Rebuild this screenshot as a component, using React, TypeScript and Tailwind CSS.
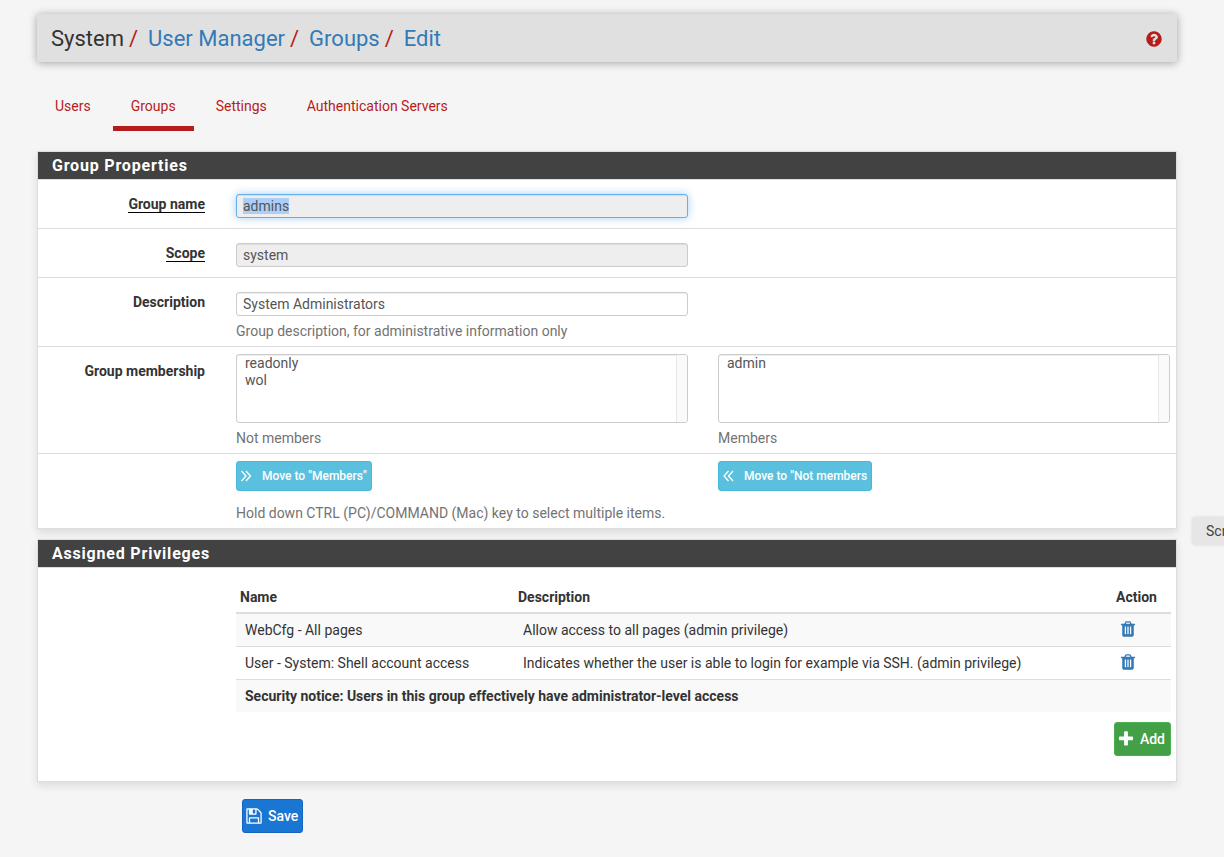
import React, { useEffect, useRef } from 'react';

interface IconProps {
  path: string;
  className?: string;
}

const icons = {
  help: 'M1024 1376v-192q0-14-9-23t-23-9h-192q-14 0-23 9t-9 23v192q0 14 9 23t23 9h192q14 0 23-9t9-23zm256-672q0-88-55.5-163t-138.5-116-170-41q-243 0-371 213-15 24 8 42l132 100q7 6 19 6 16 0 25-12 53-68 86-92 34-24 86-24 48 0 85.5 26t37.5 59q0 38-20 61t-68 45q-63 28-115.5 86.5t-52.5 125.5v36q0 14 9 23t23 9h192q14 0 23-9t9-23q0-19 21.5-49.5t54.5-49.5q32-18 49-28.5t46-35 44.5-48 28-60.5 12.5-81zm384 192q0 209-103 385.5t-279.5 279.5-385.5 103-385.5-103-279.5-279.5-103-385.5 103-385.5 279.5-279.5 385.5-103 385.5 103 279.5 279.5 103 385.5z',
  trash: 'M704 1376v-704q0-14-9-23t-23-9h-64q-14 0-23 9t-9 23v704q0 14 9 23t23 9h64q14 0 23-9t9-23zm256 0v-704q0-14-9-23t-23-9h-64q-14 0-23 9t-9 23v704q0 14 9 23t23 9h64q14 0 23-9t9-23zm256 0v-704q0-14-9-23t-23-9h-64q-14 0-23 9t-9 23v704q0 14 9 23t23 9h64q14 0 23-9t9-23zm-544-992h448l-48-117q-7-9-17-11h-317q-10 2-17 11zm928 32v64q0 14-9 23t-23 9h-96v948q0 83-47 143.5t-113 60.5h-832q-66 0-113-58.5t-47-141.5v-952h-96q-14 0-23-9t-9-23v-64q0-14 9-23t23-9h309l70-167q15-37 54-63t79-26h320q40 0 79 26t54 63l70 167h309q14 0 23 9t9 23z',
  plus: 'M1600 736v192q0 40-28 68t-68 28h-416v416q0 40-28 68t-68 28h-192q-40 0-68-28t-28-68v-416h-416q-40 0-68-28t-28-68v-192q0-40 28-68t68-28h416v-416q0-40 28-68t68-28h192q40 0 68 28t28 68v416h416q40 0 68 28t28 68z',
  save: 'M512 1536h768v-384h-768v384zm896 0h128v-896q0-14-10-38.5t-20-34.5l-281-281q-10-10-34-20t-39-10v416q0 40-28 68t-68 28h-576q-40 0-68-28t-28-68v-416h-128v1280h128v-416q0-40 28-68t68-28h832q40 0 68 28t28 68v416zm-384-928v-320q0-13-9.5-22.5t-22.5-9.5h-192q-13 0-22.5 9.5t-9.5 22.5v320q0 13 9.5 22.5t22.5 9.5h192q13 0 22.5-9.5t9.5-22.5zm640 32v928q0 40-28 68t-68 28h-1344q-40 0-68-28t-28-68v-1344q0-40 28-68t68-28h928q40 0 88 20t76 48l280 280q28 28 48 76t20 88z',
};

const Icon: React.FC<IconProps> = ({ path, className }) => (
  <svg viewBox="0 0 1792 1792" fill="currentColor" className={className} aria-hidden="true">
    <path d={path} />
  </svg>
);

const DoubleAngle: React.FC<{ points: string[] }> = ({ points }) => (
  <svg viewBox="0 0 12 12" fill="none" stroke="currentColor" strokeWidth="1.3" className="size-3" aria-hidden="true">
    {points.map(p => (
      <polyline key={p} points={p} />
    ))}
  </svg>
);

const crumbs = ['User Manager', 'Groups', 'Edit'];
const tabs = ['Users', 'Groups', 'Settings', 'Authentication Servers'];

const privileges = [
  { name: 'WebCfg - All pages', description: 'Allow access to all pages (admin privilege)' },
  {
    name: 'User - System: Shell account access',
    description: 'Indicates whether the user is able to login for example via SSH. (admin privilege)',
  },
];

const inputClass =
  'block w-full h-6 rounded-[3px] border border-[#ccc] px-[6px] text-sm text-[#555] shadow-[inset_0_1px_1px_rgba(0,0,0,0.075)] outline-none read-only:bg-[#eee] selection:bg-[#accef7] selection:text-[#555] focus:border-[#66afe9] focus:shadow-[inset_0_1px_1px_rgba(0,0,0,0.075),0_0_8px_rgba(102,175,233,0.6)]';

const moveClass =
  'flex h-[30px] w-fit items-center gap-[9px] rounded-[3px] border border-[#46b8da] bg-[#5bc0de] px-1 text-xs font-medium text-white';

interface PanelProps {
  title: string;
  children: React.ReactNode;
}

const Panel: React.FC<PanelProps> = ({ title, children }) => (
  <section className="mb-[10px] border border-[#ddd] bg-white shadow-[0_4px_8px_rgba(0,0,0,0.1)]">
    <h2 className="h-7 border-b border-[#ddd] bg-[#424242] px-[14px] text-base leading-[27px] font-bold tracking-wider text-white">
      {title}
    </h2>
    {children}
  </section>
);

interface RowProps {
  label?: string;
  htmlFor?: string;
  required?: boolean;
  className: string;
  children: React.ReactNode;
}

const Row: React.FC<RowProps> = ({ label, htmlFor, required, className, children }) => (
  <div className={`flex border-b border-[#ddd] pr-[6px] last:border-b-0 ${className}`}>
    <div className="w-[198px] shrink-0 pt-[14px] pr-[31px] text-right leading-5 font-bold">
      {label && (
        <label htmlFor={htmlFor} className={required ? 'inline-block border-b border-black leading-4' : ''}>
          {label}
        </label>
      )}
    </div>
    <div className="grid min-w-0 flex-1 grid-cols-2 items-start gap-x-[30px]">{children}</div>
  </div>
);

interface MemberListProps {
  id: string;
  caption: string;
  members: string[];
}

const MemberList: React.FC<MemberListProps> = ({ id, caption, members }) => (
  <div>
    <div className="flex h-[69px] overflow-hidden rounded-[3px] border border-[#ccc] shadow-[inset_0_1px_1px_rgba(0,0,0,0.075)]">
      <select
        id={id}
        multiple
        size={4}
        aria-label={caption}
        className="min-w-0 flex-1 overflow-hidden bg-transparent px-[6px] text-sm text-[#555] outline-none"
      >
        {members.map(m => (
          <option key={m} className="h-[17px] min-h-0 px-[2px] py-0 leading-[17px]">
            {m}
          </option>
        ))}
      </select>
      <div className="w-[11px] border-l border-[#e8e8e8] bg-[#fafafa]" />
    </div>
    <p className="mt-[5px] leading-5 text-[#737373]">{caption}</p>
  </div>
);

const App: React.FC = () => {
  const nameRef = useRef<HTMLInputElement>(null);

  useEffect(() => {
    nameRef.current?.focus();
    nameRef.current?.select();
  }, []);

  return (
    <div className="relative min-h-screen overflow-hidden bg-[#f5f5f5] pt-[14px] pr-[47px] pb-6 pl-[37px] font-[Roboto,sans-serif] text-sm text-[#333]">
      <header className="flex h-12 items-center justify-between rounded-[3px] bg-[#e0e0e0] pt-[2px] pr-[14px] pl-[14px] shadow-[0_1px_8px_rgba(0,0,0,0.35)]">
        <nav aria-label="Breadcrumb">
          <ol className="flex text-[22px] leading-6">
            <li>System</li>
            {crumbs.map(crumb => (
              <li key={crumb}>
                <span className="pr-[10px] pl-[5px] text-[#b71c1c]">/</span>
                <a href="#" className="text-[#337ab7]">{crumb}</a>
              </li>
            ))}
          </ol>
        </nav>
        <a href="#" aria-label="Help" className="text-[#b71c1c]">
          <Icon path={icons.help} className="size-[18px]" />
        </a>
      </header>

      <nav aria-label="User manager sections" className="mt-[19px] mb-5 flex gap-1">
        {tabs.map(tab => (
          <a
            key={tab}
            href="#"
            className={`h-[50px] px-[18px] pt-[15px] leading-5 text-[#b71c1c] ${tab === 'Groups' ? 'border-b-[5px] border-[#b71c1c]' : ''}`}
          >
            {tab}
          </a>
        ))}
      </nav>

      <form onSubmit={e => e.preventDefault()}>
        <Panel title="Group Properties">
          <Row label="Group name" htmlFor="groupname" required className="h-[49px]">
            <div className="pt-[14px]">
              <input id="groupname" ref={nameRef} type="text" readOnly defaultValue="admins" className={inputClass} />
            </div>
          </Row>
          <Row label="Scope" htmlFor="scope" required className="h-[49px]">
            <div className="pt-[14px]">
              <input id="scope" type="text" readOnly defaultValue="system" className={inputClass} />
            </div>
          </Row>
          <Row label="Description" htmlFor="description" className="pb-[5px]">
            <div className="pt-[14px]">
              <input id="description" type="text" defaultValue="System Administrators" className={inputClass} />
              <p className="mt-[5px] leading-5 text-[#737373]">Group description, for administrative information only</p>
            </div>
          </Row>
          <Row label="Group membership" htmlFor="notmembers" className="pb-[5px]">
            <div className="pt-[7px]">
              <MemberList id="notmembers" caption="Not members" members={['readonly', 'wol']} />
            </div>
            <div className="pt-[7px]">
              <MemberList id="members" caption="Members" members={['admin']} />
            </div>
          </Row>
          <Row className="pt-[7px] pb-[5px]">
            <button type="button" className={moveClass}>
              <DoubleAngle points={['0.5,1 5,6 0.5,11', '5,1 9.5,6 5,11']} />
              Move to "Members"
            </button>
            <button type="button" className={moveClass}>
              <DoubleAngle points={['5.5,1 1,6 5.5,11', '10,1 5.5,6 10,11']} />
              Move to "Not members
            </button>
            <p className="col-span-2 mt-3 leading-5 text-[#737373]">
              Hold down CTRL (PC)/COMMAND (Mac) key to select multiple items.
            </p>
          </Row>
        </Panel>

        <Panel title="Assigned Privileges">
          <div className="pt-[14px] pr-[5px] pb-[25px] pl-[198px]">
            <table className="w-full text-left leading-5">
              <thead>
                <tr className="border-b-2 border-[#ddd] font-bold">
                  <th className="h-[31px] w-[278px] px-1">Name</th>
                  <th className="px-1">Description</th>
                  <th className="w-[60px] px-[5px]">Action</th>
                </tr>
              </thead>
              <tbody>
                {privileges.map((p, i) => (
                  <tr key={p.name} className={`border-b border-[#ddd] ${i % 2 === 0 ? 'bg-[#f9f9f9]' : ''}`}>
                    <td className="h-[33px] px-[9px]">{p.name}</td>
                    <td className="px-[9px]">{p.description}</td>
                    <td className="pb-[2px] pl-2">
                      <a href="#" aria-label={`Delete ${p.name}`} className="block text-[#337ab7]">
                        <Icon path={icons.trash} className="size-[18px]" />
                      </a>
                    </td>
                  </tr>
                ))}
                <tr className="bg-[#f9f9f9] font-bold">
                  <td colSpan={3} className="h-[33px] px-[9px]">
                    Security notice: Users in this group effectively have administrator-level access
                  </td>
                </tr>
              </tbody>
            </table>
            <button
              type="button"
              className="mt-[10px] ml-auto flex h-[34px] items-center gap-[5px] rounded-[3px] border border-[#4caf50] bg-[#43a047] pr-[5px] pl-[2px] text-sm font-medium text-white"
            >
              <Icon path={icons.plus} className="size-[18px]" />
              Add
            </button>
          </div>
        </Panel>

        <button
          type="submit"
          className="mt-[17px] ml-[205px] flex h-[34px] items-center gap-[5px] rounded-[3px] border border-[#1565c0] bg-[#1976d2] pr-1 pl-[2px] text-sm font-medium text-white"
        >
          <Icon path={icons.save} className="size-[18px]" />
          Save
        </button>
      </form>

      {/* tooltip running off the right edge */}
      <div className="absolute top-[517px] right-0 h-7 w-8 overflow-hidden rounded-l-[4px] bg-[#e6e6e6] pl-[14px] leading-7 text-[#424242] shadow-[0_0_3px_rgba(0,0,0,0.12)]">
        Scr
      </div>
    </div>
  );
};

export default App;
